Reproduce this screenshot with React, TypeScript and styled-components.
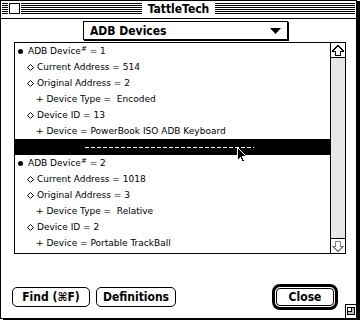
import React from "react";
import styled, { createGlobalStyle } from "styled-components";

const Global = createGlobalStyle`
  html, body { margin: 0; padding: 0; background: #fff; }
  body { width: 360px; height: 320px; overflow: hidden; }
`;

const SYS = `"DejaVu Sans Condensed", "DejaVu Sans", sans-serif`;
const SMALL = `"DejaVu Sans", "Liberation Sans", sans-serif`;

const Window = styled.div`
  position: relative;
  width: 357px;
  height: 319px;
  box-sizing: border-box;
  border: 1px solid #000;
  box-shadow: 3px 1px 0 #000;
  background: #fff;
  display: flex;
  flex-direction: column;
`;

const TitleBar = styled.div`
  height: 17px;
  border-bottom: 1px solid #000;
  display: grid;
  grid-template-columns: 1fr auto 1fr;
  align-items: start;
  background: repeating-linear-gradient(#000 0 1px, #fff 1px 2px) 1px 2px /
    calc(100% - 2px) 11px no-repeat;
`;

const CloseBox = styled.div`
  width: 11px;
  height: 11px;
  box-sizing: border-box;
  margin: 2px 0 0 8px;
  border: 1px solid #000;
  background: #fff;
  box-shadow: 0 0 0 1px #fff;
`;

const Title = styled.div`
  background: #fff;
  padding: 0 6px;
  height: 17px;
  line-height: 17px;
  font-family: ${SYS};
  font-weight: bold;
  font-stretch: condensed;
  font-size: 12px;
  color: #000;
`;

const Body = styled.div`
  flex: 1;
  display: flex;
  flex-direction: column;
  padding-left: 11px;
`;

const Popup = styled.div`
  margin: 2px 0 0 71px;
  width: 205px;
  height: 19px;
  box-sizing: border-box;
  border: 1px solid #000;
  box-shadow: 1px 1px 0 #000;
  display: flex;
  align-items: center;
  justify-content: space-between;
  padding: 0 6px 0 6px;
  font-family: ${SYS};
  font-weight: bold;
  font-stretch: condensed;
  font-size: 12px;
`;

const ListBox = styled.div`
  margin: 2px 0 0 2px;
  width: 332px;
  height: 212px;
  box-sizing: border-box;
  border: 1px solid #000;
  display: flex;
`;

const ListContent = styled.div`
  position: relative;
  flex: 1;
  display: flex;
  flex-direction: column;
  overflow: hidden;
`;

const Row = styled.div<{ $level: number }>`
  height: 16px;
  line-height: 16px;
  display: flex;
  align-items: center;
  padding-left: ${(p) => (p.$level === 0 ? 3 : p.$level === 1 ? 12 : 21)}px;
  gap: ${(p) => (p.$level === 0 ? 5 : 3)}px;
  font-family: ${SMALL};
  font-size: 9px;
  color: #000;
  white-space: pre;
`;

const Bullet = styled.span`
  width: 5px;
  height: 5px;
  border-radius: 50%;
  background: #000;
`;

const Sup = styled.span`
  font-size: 7px;
  position: relative;
  top: -3px;
`;

const SelectedRow = styled.div`
  height: 16px;
  background: #000;
  display: flex;
`;

const DashLine = styled.div`
  margin: 8px 0 0 70px;
  width: 169px;
  height: 1px;
  background: repeating-linear-gradient(to right, #fff 0 4px, transparent 4px 6px);
`;

const Cursor = styled.svg`
  position: absolute;
  left: 221px;
  top: 103px;
`;

const ScrollBar = styled.div`
  width: 15px;
  box-sizing: border-box;
  border-left: 1px solid #000;
  display: flex;
  flex-direction: column;
  background: #e6e6e6;
`;

const ArrowCell = styled.div<{ $bottom?: boolean }>`
  height: 15px;
  box-sizing: border-box;
  background: #fff;
  ${(p) => (p.$bottom ? "border-top: 1px solid #000;" : "border-bottom: 1px solid #000;")}
  display: flex;
  align-items: center;
  justify-content: center;
`;

const Track = styled.div`
  flex: 1;
`;

const ButtonRow = styled.div`
  margin-top: 30px;
  height: 26px;
  display: flex;
  align-items: center;
  padding-right: 18px;
`;

const Button = styled.div<{ $w: number }>`
  width: ${(p) => p.$w}px;
  height: 20px;
  box-sizing: border-box;
  border: 1px solid #000;
  border-radius: 5px;
  display: flex;
  align-items: center;
  justify-content: center;
  font-family: ${SYS};
  font-weight: bold;
  font-stretch: condensed;
  font-size: 12px;
  & + & {
    margin-left: 6px;
  }
`;

const DefaultRing = styled.div`
  margin-left: auto;
  width: 66px;
  height: 26px;
  box-sizing: border-box;
  border: 3px solid #000;
  border-radius: 8px;
  padding: 1px;
  display: flex;
`;

const InnerButton = styled.div`
  flex: 1;
  box-sizing: border-box;
  border: 1px solid #000;
  border-radius: 4px;
  display: flex;
  align-items: center;
  justify-content: center;
  font-family: ${SYS};
  font-weight: bold;
  font-stretch: condensed;
  font-size: 12px;
`;

const GrowBox = styled.svg`
  position: absolute;
  right: 0;
  bottom: 0;
`;

const Diamond = () => (
  <svg width="7" height="7" viewBox="0 0 7 7">
    <polygon points="3.5,0.5 6.5,3.5 3.5,6.5 0.5,3.5" fill="none" stroke="#000" strokeWidth="1" />
  </svg>
);

type Item = { level: number; text: React.ReactNode };

const block = (n: number, cur: string, orig: string, type: string, id: string, dev: string): Item[] => [
  {
    level: 0,
    text: (
      <>
        ADB Device<Sup>#</Sup> = {n}
      </>
    ),
  },
  { level: 1, text: `Current Address = ${cur}` },
  { level: 1, text: `Original Address = ${orig}` },
  { level: 2, text: `+ Device Type =  ${type}` },
  { level: 1, text: `Device ID = ${id}` },
  { level: 2, text: `+ Device = ${dev}` },
];

const ListRow = ({ item }: { item: Item }) => (
  <Row $level={item.level}>
    {item.level === 0 && <Bullet />}
    {item.level === 1 && <Diamond />}
    <span>{item.text}</span>
  </Row>
);

export default function App() {
  const first = block(1, "514", "2", "Encoded", "13", "PowerBook ISO ADB Keyboard");
  const second = block(2, "1018", "3", "Relative", "2", "Portable TrackBall");
  return (
    <>
      <Global />
      <Window>
        <TitleBar>
          <div>
            <CloseBox />
          </div>
          <Title>TattleTech</Title>
          <div />
        </TitleBar>
        <Body>
          <Popup>
            <span>ADB Devices</span>
            <svg width="11" height="6" viewBox="0 0 11 6">
              <polygon points="0,0 11,0 5.5,6" fill="#000" />
            </svg>
          </Popup>
          <ListBox>
            <ListContent>
              {first.map((it, i) => (
                <ListRow key={"a" + i} item={it} />
              ))}
              <SelectedRow>
                <DashLine />
              </SelectedRow>
              {second.map((it, i) => (
                <ListRow key={"b" + i} item={it} />
              ))}
              <Cursor width="12" height="18" viewBox="0 0 12 18" shapeRendering="crispEdges">
                <path d="M1.5 1.5 V14.5 L4.5 11.5 L6.5 16.5 L8.5 15.5 L6.5 10.5 H10.5 Z" fill="#000" stroke="#fff" strokeWidth="1" />
              </Cursor>
            </ListContent>
            <ScrollBar>
              <ArrowCell>
                <svg width="12" height="11" viewBox="0 0 12 11" shapeRendering="crispEdges">
                  <polygon points="6,0.5 11.5,6 8.5,6 8.5,10.5 3.5,10.5 3.5,6 0.5,6" fill="#fff" stroke="#000" strokeWidth="1" />
                </svg>
              </ArrowCell>
              <Track />
              <ArrowCell $bottom>
                <svg width="12" height="11" viewBox="0 0 12 11" shapeRendering="crispEdges">
                  <polygon points="3.5,0.5 8.5,0.5 8.5,5 11.5,5 6,10.5 0.5,5 3.5,5" fill="#fff" stroke="#808080" strokeWidth="1" />
                </svg>
              </ArrowCell>
            </ScrollBar>
          </ListBox>
          <ButtonRow>
            <Button $w={78}>Find (⌘F)</Button>
            <Button $w={80}>Definitions</Button>
            <DefaultRing>
              <InnerButton>Close</InnerButton>
            </DefaultRing>
          </ButtonRow>
        </Body>
        <GrowBox width="11" height="14" viewBox="0 0 11 14" shapeRendering="crispEdges">
          <rect x="0.5" y="0.5" width="11" height="14" fill="#fff" stroke="#000" />
          <rect x="2.5" y="3.5" width="7" height="7" fill="#bbb" stroke="#000" />
          <rect x="2.5" y="3.5" width="4" height="4" fill="#fff" stroke="#000" />
        </GrowBox>
      </Window>
    </>
  );
}
